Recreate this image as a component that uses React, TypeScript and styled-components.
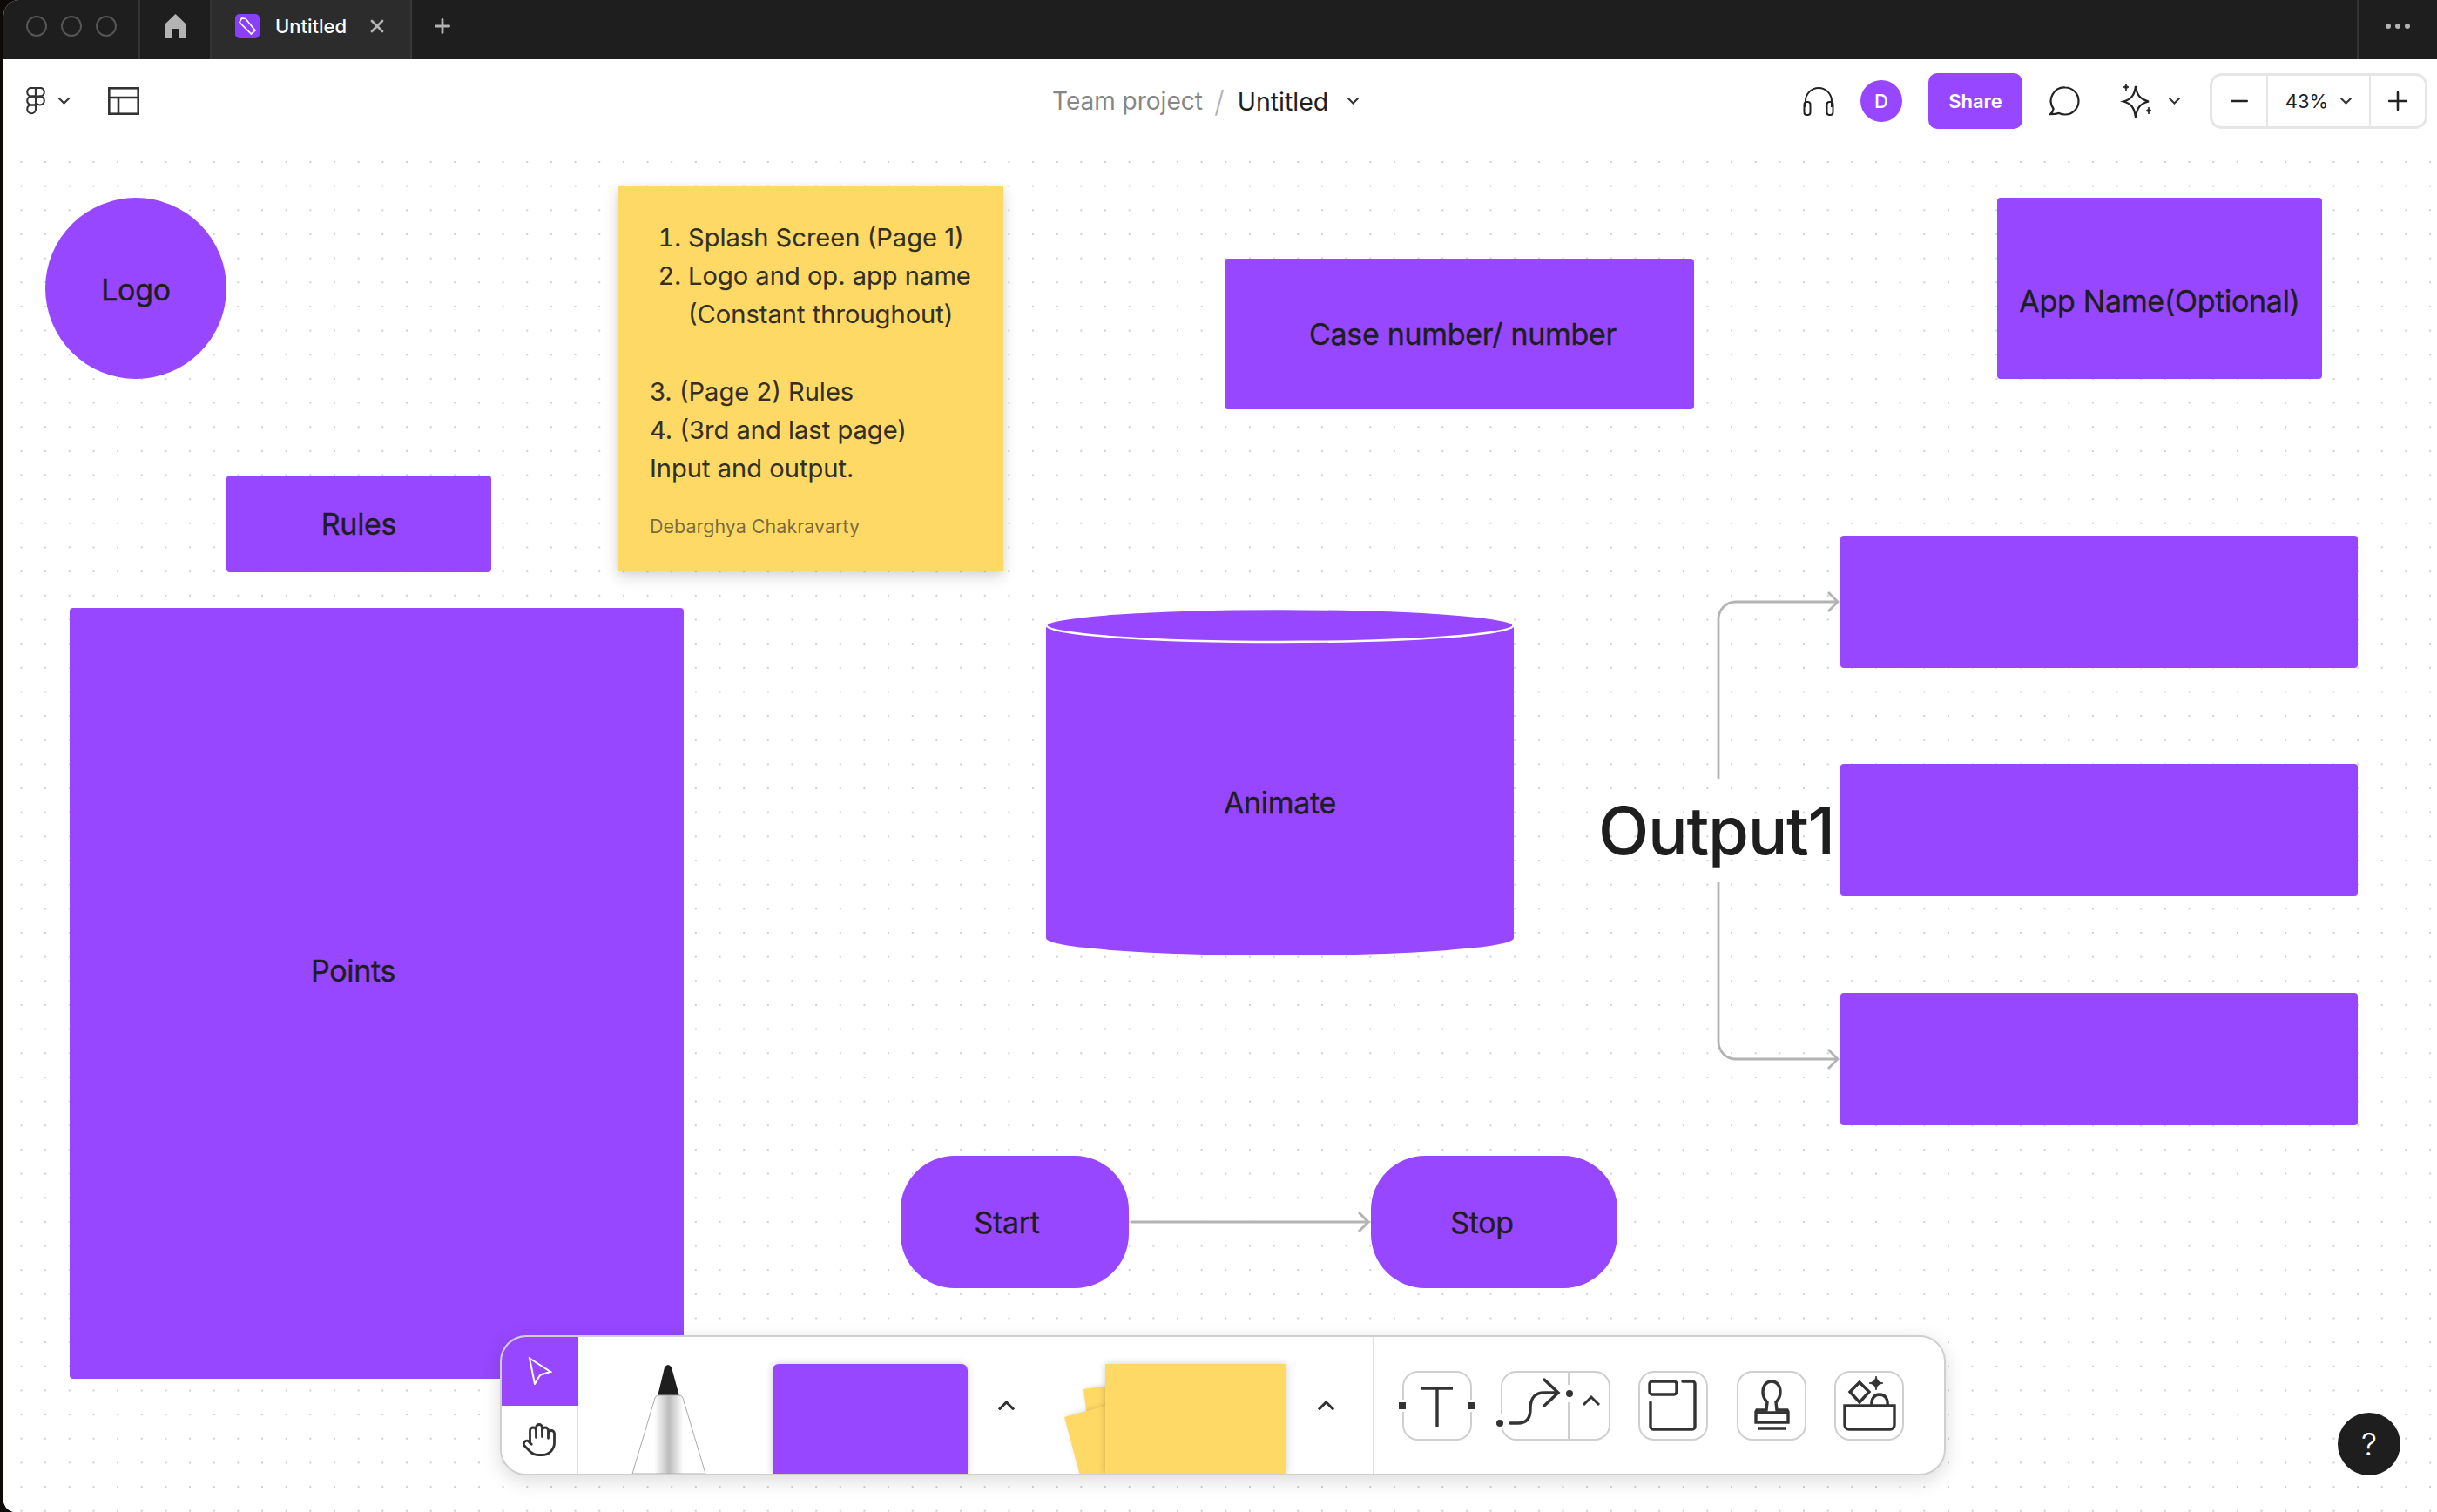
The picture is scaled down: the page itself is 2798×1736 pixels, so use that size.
import React from "react";
import styled, { createGlobalStyle } from "styled-components";
import { Hand, X, Plus, Minus } from "lucide-react";

const purple = "#9747ff";
const yellow = "#ffd966";
const ink = "#1e1e1e";

const Global = createGlobalStyle`
  html, body { margin: 0; padding: 0; background: #0d0a07; }
  * { box-sizing: border-box; }
  body { font-family: Inter, "Liberation Sans", sans-serif; color: ${ink}; }
`;

const Page = styled.div`
  width: 2798px;
  height: 1736px;
  padding-left: 4px;
  overflow: hidden;
`;

const Win = styled.div`
  position: relative;
  height: 100%;
  display: flex;
  flex-direction: column;
  background: #fff;
  border-top-left-radius: 18px;
  border-bottom-left-radius: 14px;
  overflow: hidden;
`;

/* title bar */
const TitleBar = styled.div`
  height: 68px;
  flex: none;
  display: flex;
  align-items: stretch;
  background: #1e1e1e;
`;

const Lights = styled.div`
  width: 157px;
  display: flex;
  align-items: center;
  gap: 16px;
  padding: 0 0 8px 26px;
  border-right: 2px solid #333;
`;

const Light = styled.span`
  width: 24px;
  height: 24px;
  border-radius: 50%;
  border: 2px solid #555;
`;

const HomeSlot = styled.div`
  width: 82px;
  display: flex;
  align-items: center;
  justify-content: center;
  padding-bottom: 8px;
  border-right: 2px solid #333;
`;

const Tab = styled.div`
  width: 230px;
  display: flex;
  align-items: center;
  padding: 0 0 8px 27px;
  background: #2c2c2c;
  border-right: 2px solid #383838;
  color: #fff;
  font-size: 22px;
  font-weight: 500;
`;

const TabTitle = styled.span`
  margin: 0 23px 0 18px;
`;

const NewTab = styled.div`
  margin-left: 22px;
  padding-bottom: 8px;
  display: flex;
  align-items: center;
  color: #b3b3b3;
`;

const More = styled.div`
  margin-left: auto;
  width: 92px;
  padding-bottom: 8px;
  display: flex;
  align-items: center;
  justify-content: center;
  gap: 5px;
  border-left: 2px solid #333;
`;

const MoreDot = styled.span`
  width: 6px;
  height: 6px;
  border-radius: 50%;
  background: #b3b3b3;
`;

/* header */
const Header = styled.div`
  height: 96px;
  flex: none;
  display: flex;
  align-items: flex-start;
  background: #fff;
`;

const HeaderLeft = styled.div`
  width: 1204px;
  height: 64px;
  margin-top: 16px;
  display: flex;
  align-items: center;
  padding-left: 26px;
`;

const ChevronWrap = styled.div`
  width: 72px;
  padding-left: 15px;
  display: flex;
  align-items: center;
`;

const Crumbs = styled.div`
  height: 64px;
  margin-top: 16px;
  display: flex;
  align-items: center;
  font-size: 28px;
`;

const Team = styled.span`
  color: #868686;
`;

const Slash = styled.span`
  color: #b3b3b3;
  font-size: 34px;
  font-weight: 300;
  margin: 0 15px 0 13px;
`;

const FileName = styled.span`
  color: ${ink};
  font-size: 28.5px;
  margin-right: 22px;
`;

const HeaderRight = styled.div`
  margin-left: auto;
  margin-top: 16px;
  padding-right: 11px;
  height: 64px;
  display: flex;
  align-items: center;
`;

const Avatar = styled.div`
  width: 48px;
  height: 48px;
  margin: 0 30px;
  border-radius: 50%;
  background: ${purple};
  color: #fff;
  font-size: 22px;
  font-weight: 500;
  display: flex;
  align-items: center;
  justify-content: center;
`;

const Share = styled.div`
  width: 108px;
  height: 64px;
  margin-right: 30px;
  border-radius: 10px;
  background: ${purple};
  color: #fff;
  font-size: 22px;
  font-weight: 600;
  display: flex;
  align-items: center;
  justify-content: center;
`;

const SparkGap = styled.div`
  margin: 0 16px 0 46px;
  display: flex;
  align-items: center;
`;

const ZoomGroup = styled.div`
  width: 250px;
  height: 64px;
  margin-left: 34px;
  display: flex;
  border: 3px solid #e6e6e6;
  border-radius: 14px;
  background: #fff;
`;

const ZoomCell = styled.div<{ $w: number; $last?: boolean }>`
  width: ${(p) => p.$w}px;
  display: flex;
  align-items: center;
  justify-content: center;
  gap: 14px;
  font-size: 22px;
  border-right: ${(p) => (p.$last ? "none" : "2px solid #e6e6e6")};
`;

/* canvas */
const Board = styled.div`
  position: relative;
  flex: 1;
  background-color: #fff;
  background-image: radial-gradient(circle, #cfcfcf 1px, transparent 1.5px);
  background-size: 27.67px 27.67px;
  background-position: 6.67px 8.17px;
`;

type Box = { $x: number; $y: number; $w: number; $h: number };

const Node = styled.div<Box>`
  position: absolute;
  left: ${(p) => p.$x - 4}px;
  top: ${(p) => p.$y - 164}px;
  width: ${(p) => p.$w}px;
  height: ${(p) => p.$h}px;
`;

const Shape = styled(Node)<{ $r?: number }>`
  display: flex;
  align-items: center;
  justify-content: center;
  background: ${purple};
  border-radius: ${(p) => p.$r ?? 4}px;
`;

const Label = styled.span<{ $dx?: number; $dy?: number }>`
  font-size: 34px;
  letter-spacing: -0.3px;
  white-space: nowrap;
  color: ${ink};
  -webkit-text-stroke: 0.35px ${ink};
  transform: translate(${(p) => p.$dx ?? 0}px, ${(p) => p.$dy ?? 0}px);
`;

const Sticky = styled(Node)`
  padding: 37px 0 0 37px;
  background: ${yellow};
  box-shadow: 0 6px 16px rgba(0, 0, 0, 0.16), 0 0 6px rgba(0, 0, 0, 0.06);
  color: rgba(30, 30, 30, 0.92);
  font-size: 29.1px;
  line-height: 44.2px;
  -webkit-text-stroke: 0.2px rgba(30, 30, 30, 0.8);
`;

const StickyList = styled.ol`
  margin: 0;
  padding: 0 0 0 44px;
`;

const StickyLine = styled.div<{ $gap?: boolean }>`
  margin-top: ${(p) => (p.$gap ? 44 : 0)}px;
`;

const Author = styled.div`
  margin-top: 22px;
  font-size: 21.5px;
  color: rgba(30, 30, 30, 0.6);
  -webkit-text-stroke: 0;
`;

const CylinderLabel = styled(Node)`
  display: flex;
  align-items: center;
  justify-content: center;
`;

const BigText = styled(Node)`
  font-size: 76px;
  font-weight: 500;
  line-height: 92px;
  letter-spacing: -1.3px;
  white-space: nowrap;
  color: ${ink};
`;

const Help = styled.div`
  position: absolute;
  right: 42px;
  bottom: 42px;
  width: 72px;
  height: 72px;
  border-radius: 50%;
  background: #1e1e1e;
  color: #fff;
  font-size: 36px;
  font-weight: 300;
  display: flex;
  align-items: center;
  justify-content: center;
`;

/* bottom toolbar */
const Toolbar = styled.div`
  position: absolute;
  left: 570px;
  top: 1369px;
  width: 1660px;
  height: 161px;
  display: flex;
  align-items: stretch;
  background: #fff;
  border: 2px solid #cfcfcf;
  border-radius: 30px;
  box-shadow: 0 6px 22px rgba(0, 0, 0, 0.14);
  overflow: hidden;
`;

const ToolColumn = styled.div`
  width: 88px;
  flex: none;
  display: flex;
  flex-direction: column;
  border-right: 2px solid #e0e0e0;
`;

const ToolCell = styled.div<{ $active?: boolean }>`
  flex: 1;
  margin-right: ${(p) => (p.$active ? "-2px" : "0")};
  display: flex;
  align-items: center;
  justify-content: center;
  background: ${(p) => (p.$active ? purple : "#fff")};
  color: #333;
`;

const PenSlot = styled.div`
  width: 90px;
  margin-left: 58px;
  display: flex;
  align-items: flex-end;
`;

const Tile = styled.div<{ $left: number; $w: number }>`
  position: relative;
  flex: none;
  align-self: flex-end;
  margin-left: ${(p) => p.$left}px;
  width: ${(p) => p.$w}px;
  height: 126px;
  box-shadow: 0 0 8px rgba(0, 0, 0, 0.2);
`;

const ShapeTile = styled(Tile)`
  background: ${purple};
  border-radius: 7px 7px 0 0;
`;

const NoteTile = styled(Tile)`
  background: ${yellow};
`;

const NoteSheet = styled.div<{ $l: number; $t: number; $a: number }>`
  position: absolute;
  left: ${(p) => p.$l}px;
  top: ${(p) => p.$t}px;
  width: 120px;
  height: 160px;
  background: ${yellow};
  box-shadow: 2px 0 6px rgba(0, 0, 0, 0.18);
  transform-origin: 0 0;
  transform: rotate(${(p) => p.$a}deg);
  z-index: -1;
`;

const NoteStack = styled.div`
  position: relative;
  isolation: isolate;
  flex: none;
  align-self: flex-end;
`;

const UpSlot = styled.div<{ $w: number }>`
  flex: none;
  width: ${(p) => p.$w}px;
  display: flex;
  align-items: center;
  justify-content: center;
`;

const Rule = styled.div`
  width: 2px;
  flex: none;
  margin-left: 8px;
  background: #e0e0e0;
`;

const Tools = styled.div`
  flex: 1;
  display: flex;
  align-items: center;
  padding: 0 0 0 32px;
  gap: 32.5px;
`;

const ToolBtn = styled.div<{ $w?: number }>`
  position: relative;
  width: ${(p) => p.$w ?? 80}px;
  height: 80px;
  flex: none;
  border: 2px solid #cfcfcf;
  border-radius: 18px;
`;

const Handle = styled.span<{ $side: "left" | "right" }>`
  position: absolute;
  top: 34px;
  ${(p) => p.$side}: -6px;
  width: 8px;
  height: 8px;
  background: #333;
  box-shadow: 0 0 0 3px #fff;
`;

const IconFill = styled.svg`
  position: absolute;
  left: -2px;
  top: -2px;
  overflow: visible;
`;

const Chevron = ({ up, size = 12, color = "#333", w = 2 }: { up?: boolean; size?: number; color?: string; w?: number }) => (
  <svg width={size} height={size * 0.6} viewBox="0 0 20 12" fill="none" stroke={color} strokeWidth={(w * 20) / size}>
    <path d={up ? "M1 11 10 2l9 9" : "M1 1l9 9 9-9"} />
  </svg>
);

const App = () => (
  <Page>
    <Global />
    <Win>
      <TitleBar>
        <Lights>
          <Light />
          <Light />
          <Light />
        </Lights>
        <HomeSlot>
          <svg width="25" height="28" viewBox="0 0 25 28" fill="#b3b3b3">
            <path d="M12.5 0 25 12v16H16V17H9v11H0V12z" />
          </svg>
        </HomeSlot>
        <Tab>
          <svg width="28" height="28" viewBox="0 0 28 28">
            <rect width="28" height="28" rx="5" fill="#8a3ffc" />
            <path d="M5 9.500 7.500 5l4.500.5 11 13.500-4.500 4z" fill="none" stroke="#fff" strokeWidth="1.700" />
          </svg>
          <TabTitle>Untitled</TabTitle>
          <X size={24} color="#b3b3b3" strokeWidth={2.8} />
        </Tab>
        <NewTab>
          <Plus size={26} strokeWidth={2.6} />
        </NewTab>
        <More>
          <MoreDot />
          <MoreDot />
          <MoreDot />
        </More>
      </TitleBar>

      <Header>
        <HeaderLeft>
          <svg width="22" height="32" viewBox="0 0 24 36" fill="none" stroke="#333" strokeWidth="2.400">
            <path d="M12 1H6.500a5.500 5.500 0 0 0 0 11H12z" />
            <path d="M12 1h5.500a5.500 5.500 0 0 1 0 11H12z" />
            <path d="M12 12H6.500a5.500 5.500 0 0 0 0 11H12z" />
            <circle cx="17.500" cy="17.500" r="5.500" />
            <path d="M6.500 23H12v6a5.500 5.500 0 1 1-5.500-6z" />
          </svg>
          <ChevronWrap>
            <Chevron size={13} />
          </ChevronWrap>
          <svg width="36" height="32" viewBox="0 0 36 32" fill="none" stroke="#333" strokeWidth="2.600">
            <rect x="1.300" y="1.300" width="33.400" height="29.400" />
            <path d="M1 12h34M12 12v19" />
          </svg>
        </HeaderLeft>
        <Crumbs>
          <Team>Team project</Team>
          <Slash>/</Slash>
          <FileName>Untitled</FileName>
          <Chevron size={13} />
        </Crumbs>
        <HeaderRight>
          <svg width="36" height="34" viewBox="0 0 36 34" fill="none" stroke="#222" strokeWidth="2">
            <path d="M3 24v-7a15 15 0 0 1 30 0v7" />
            <rect x="1.500" y="18" width="7" height="15" rx="3" />
            <rect x="27.500" y="18" width="7" height="15" rx="3" />
          </svg>
          <Avatar>D</Avatar>
          <Share>Share</Share>
          <svg width="36" height="34" viewBox="0 0 36 34" fill="none" stroke="#222" strokeWidth="2.200">
            <path d="M19 1.500a15.500 15.500 0 0 1 0 31c-2.800 0-5-.6-7-1.600-2.800.9-6 1.300-10 1.300 2-1.700 3.200-3.700 3.600-6.200A15.500 15.500 0 0 1 19 1.500z" />
          </svg>
          <SparkGap>
            <svg width="40" height="42" viewBox="0 0 40 42" fill="none" stroke="#222" strokeWidth="2.200">
              <path d="M18 4c1.200 10 5 15 15 17.500-10 2.300-13.800 7.500-15 18.500-1.200-11-5-16.200-14-18.500C13 19 16.800 14 18 4z" />
              <path d="M7 1c.4 2.500 1.100 3.300 3 4-1.900.7-2.600 1.500-3 4-.4-2.500-1.100-3.300-3-4 1.900-.7 2.600-1.500 3-4zM33 28c.4 2.500 1.100 3.300 3 4-1.900.7-2.600 1.500-3 4-.4-2.500-1.100-3.300-3-4 1.900-.7 2.600-1.500 3-4z" fill="#222" strokeWidth="1" />
            </svg>
          </SparkGap>
          <Chevron size={13} />
          <ZoomGroup>
            <ZoomCell $w={64}>
              <Minus size={30} color="#222" strokeWidth={2} />
            </ZoomCell>
            <ZoomCell $w={118}>
              43%
              <Chevron size={13} />
            </ZoomCell>
            <ZoomCell $w={62} $last>
              <Plus size={34} color="#222" strokeWidth={1.8} />
            </ZoomCell>
          </ZoomGroup>
        </HeaderRight>
      </Header>

      <Board>
        <Shape $x={52} $y={227} $w={208} $h={208} $r={104}>
          <Label $dy={1}>Logo</Label>
        </Shape>
        <Shape $x={260} $y={546} $w={304} $h={111}>
          <Label>Rules</Label>
        </Shape>
        <Shape $x={80} $y={698} $w={705} $h={885}>
          <Label $dx={-27} $dy={-26}>Points</Label>
        </Shape>
        <Sticky $x={709} $y={214} $w={443} $h={442}>
          <StickyList>
            <li>Splash Screen (Page 1)</li>
            <li>
              Logo and op. app name
              <br />
              (Constant throughout)
            </li>
          </StickyList>
          <StickyLine $gap>3. (Page 2) Rules</StickyLine>
          <StickyLine>4. (3rd and last page)</StickyLine>
          <StickyLine>Input and output.</StickyLine>
          <Author>Debarghya Chakravarty</Author>
        </Sticky>
        <Shape $x={1406} $y={297} $w={539} $h={173}>
          <Label $dx={4}>Case number/ number</Label>
        </Shape>
        <Shape $x={2293} $y={227} $w={373} $h={208}>
          <Label $dy={14}>App Name(Optional)</Label>
        </Shape>

        <Node $x={1201} $y={699} $w={537} $h={398}>
          <svg width="537" height="398" viewBox="0 0 537 398">
            <path d="M0 19V378A268.500 20 0 0 0 537 378V19z" fill={purple} />
            <ellipse cx="268.500" cy="19" rx="268" ry="19" fill={purple} stroke="#fff" strokeWidth="2.500" />
          </svg>
        </Node>
        <CylinderLabel $x={1201} $y={699} $w={537} $h={398}>
          <Label $dy={23}>Animate</Label>
        </CylinderLabel>

        <BigText $x={1835} $y={907} $w={280} $h={92}>Output1</BigText>
        <Node $x={1960} $y={670} $w={160} $h={560}>
          <svg width="160" height="560" viewBox="0 0 160 560" fill="none" stroke="#b3b3b3" strokeWidth="2.800">
            <path d="M13 224V41a20 20 0 0 1 20-20h117M139 10l11 11-11 11" />
            <path d="M13 343v183a20 20 0 0 0 20 20h117M139 535l11 11-11 11" />
          </svg>
        </Node>
        <Shape $x={2113} $y={615} $w={594} $h={152} />
        <Shape $x={2113} $y={877} $w={594} $h={152} />
        <Shape $x={2113} $y={1140} $w={594} $h={152} />

        <Shape $x={1034} $y={1327} $w={262} $h={152} $r={62}>
          <Label $dx={-9}>Start</Label>
        </Shape>
        <Node $x={1296} $y={1390} $w={280} $h={26}>
          <svg width="280" height="26" viewBox="0 0 280 26" fill="none" stroke="#b3b3b3" strokeWidth="3">
            <path d="M3 13h272M264 2l11 11-11 11" />
          </svg>
        </Node>
        <Shape $x={1574} $y={1327} $w={283} $h={152} $r={62}>
          <Label $dx={-14}>Stop</Label>
        </Shape>

        <Toolbar>
          <ToolColumn>
            <ToolCell $active>
              <svg width="28" height="32" viewBox="0 0 28 32" fill="none" stroke="#fff" strokeWidth="2">
                <path d="M2 1.500 26 17l-10 3q-2 .6-3 2.500L8 31z" />
              </svg>
            </ToolCell>
            <ToolCell>
              <Hand size={42} strokeWidth={1.6} />
            </ToolCell>
          </ToolColumn>
          <PenSlot>
            <svg width="90" height="127" viewBox="0 0 90 127">
              <defs>
                <linearGradient id="penBody" x1="0" x2="1" y1="0" y2="0">
                  <stop offset="0.3" stopColor="#fff" />
                  <stop offset="0.5" stopColor="#bcbcbc" />
                  <stop offset="0.7" stopColor="#fff" />
                </linearGradient>
              </defs>
              <path d="M33 38 41 5q4-6 8 0l9 33z" fill="#1e1e1e" />
              <path d="M4 127 30 40q1-3 4-3h24q3 0 4 3l26 87z" fill="url(#penBody)" stroke="#aaa" strokeWidth="1" />
            </svg>
          </PenSlot>
          <ShapeTile $left={75} $w={224} />
          <UpSlot $w={88}>
            <Chevron up size={19} w={3} />
          </UpSlot>
          <NoteStack>
            <NoteTile $left={70} $w={208}>
              <NoteSheet $l={-25} $t={29} $a={-7.5} />
              <NoteSheet $l={-47} $t={61} $a={-15} />
            </NoteTile>
          </NoteStack>
          <UpSlot $w={91}>
            <Chevron up size={19} w={3} />
          </UpSlot>
          <Rule />
          <Tools>
            <ToolBtn>
              <Handle $side="left" />
              <Handle $side="right" />
              <IconFill width="80" height="80" viewBox="0 0 80 80" fill="none" stroke="#333" strokeWidth="3.400">
                <path d="M21 20h37M40 20v44" />
              </IconFill>
            </ToolBtn>
            <ToolBtn $w={126}>
              <IconFill width="126" height="80" viewBox="0 0 126 80" fill="none" stroke="#333" strokeWidth="3.400">
                <path d="M78 0v80" stroke="#cfcfcf" strokeWidth="2" />
                <path d="M78 16v20" stroke="#fff" strokeWidth="6" />
                <path d="M-1 50v20" stroke="#fff" strokeWidth="6" />
                <circle cx="-1" cy="60" r="4" fill="#333" stroke="none" />
                <circle cx="79" cy="26" r="4" fill="#333" stroke="none" />
                <path d="M11 60h9c10 0 14-6 14-16 0-12 4-19 16-19h15M50 10l16 15-16 15" strokeLinecap="round" />
                <path d="M95 39l9-9 9 9" strokeWidth="3" />
              </IconFill>
            </ToolBtn>
            <ToolBtn>
              <IconFill width="80" height="80" viewBox="0 0 80 80" fill="none" stroke="#333" strokeWidth="3.400">
                <rect x="13" y="12" width="31" height="15" rx="3" />
                <path d="M51 12h11a3 3 0 0 1 3 3v49a3 3 0 0 1-3 3H17a3 3 0 0 1-3-3V36" strokeLinecap="round" />
              </IconFill>
            </ToolBtn>
            <ToolBtn>
              <IconFill width="80" height="80" viewBox="0 0 80 80" fill="none" stroke="#333" strokeWidth="3.400">
                <path d="M35 36c-3-3-5-7-5-12 0-7 4-12 10-12s10 5 10 12c0 5-2 9-5 12l1 9h12l1 2v12H22V47l1-2h11z" />
                <path d="M22 48h36M24 66h32" />
              </IconFill>
            </ToolBtn>
            <ToolBtn>
              <IconFill width="80" height="80" viewBox="0 0 80 80" fill="none" stroke="#333" strokeWidth="3.400">
                <path d="M12 40h57v22a5 5 0 0 1-5 5H17a5 5 0 0 1-5-5z" />
                <path d="M43 40c-1-8 3-13 9-13s10 5 9 13" />
                <path d="M29 13l11 11-11 12-11-12z" />
                <path d="M48 6c1 5 3 7 8 8-5 1-7 3-8 8-1-5-3-7-8-8 5-1 7-3 8-8z" fill="#333" strokeWidth="1" />
              </IconFill>
            </ToolBtn>
          </Tools>
        </Toolbar>

        <Help>?</Help>
      </Board>
    </Win>
  </Page>
);

export default App;
